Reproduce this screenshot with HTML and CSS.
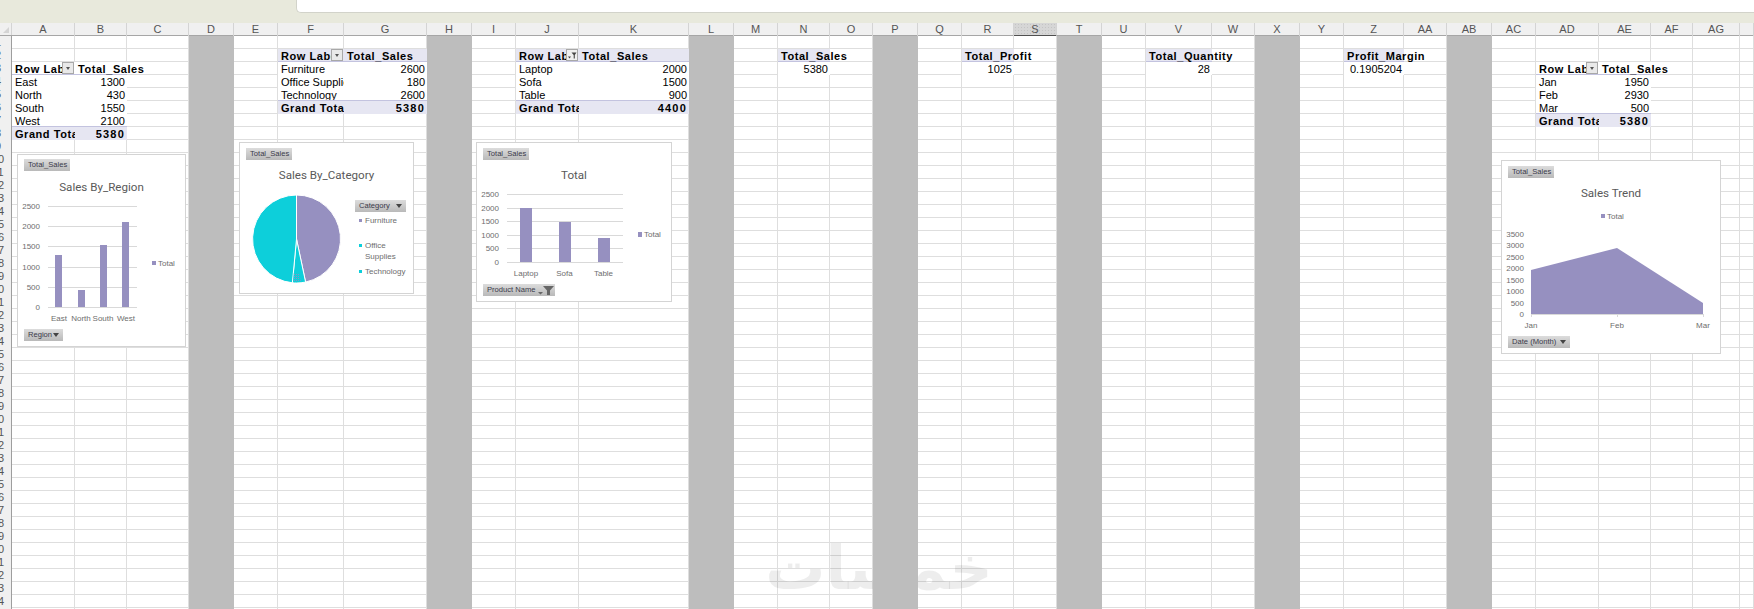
FILE: index.html
```html
<!DOCTYPE html>
<html lang="en">
<head>
<meta charset="utf-8">
<title>Sales dashboard workbook</title>
<link rel="stylesheet" href="styles.css">
</head>
<body>
<div class="ribbon"><div class="formula-box"></div></div>
<div class="head-row">
  <div class="corner"></div>
  <div class="col-heads">
    <div>A</div><div>B</div><div>C</div><div>D</div><div>E</div><div>F</div><div>G</div><div>H</div><div>I</div><div>J</div><div>K</div><div>L</div><div>M</div><div>N</div><div>O</div><div>P</div><div>Q</div><div>R</div><div class="selected">S</div><div>T</div><div>U</div><div>V</div><div>W</div><div>X</div><div>Y</div><div>Z</div><div>AA</div><div>AB</div><div>AC</div><div>AD</div><div>AE</div><div>AF</div><div>AG</div><div></div>
  </div>
</div>
<div class="body-row">
  <div class="row-heads">
    <div><span>1</span></div><div><span>2</span></div><div><span>3</span></div><div><span>4</span></div><div><span>5</span></div><div><span>6</span></div><div><span>7</span></div><div><span>8</span></div><div><span>9</span></div><div><span>10</span></div><div><span>11</span></div><div><span>12</span></div><div><span>13</span></div><div><span>14</span></div><div><span>15</span></div><div><span>16</span></div><div><span>17</span></div><div><span>18</span></div><div><span>19</span></div><div><span>20</span></div><div><span>21</span></div><div><span>22</span></div><div><span>23</span></div><div><span>24</span></div><div><span>25</span></div><div><span>26</span></div><div><span>27</span></div><div><span>28</span></div><div><span>29</span></div><div><span>30</span></div><div><span>31</span></div><div><span>32</span></div><div><span>33</span></div><div><span>34</span></div><div><span>35</span></div><div><span>36</span></div><div><span>37</span></div><div><span>38</span></div><div><span>39</span></div><div><span>40</span></div><div><span>41</span></div><div><span>42</span></div><div><span>43</span></div><div><span>44</span></div>
  </div>
  <div class="sheet">
    <div class="gridlines">
      <div></div><div></div><div></div><div class="gap"></div><div></div><div></div><div></div><div class="gap"></div><div></div><div></div><div></div><div class="gap"></div><div></div><div></div><div></div><div class="gap"></div><div></div><div></div><div></div><div class="gap"></div><div></div><div></div><div></div><div class="gap"></div><div></div><div></div><div></div><div class="gap"></div><div></div><div></div><div></div><div></div><div></div><div></div>
    </div>

    <div class="pivot pv-region">
      <div class="cell head-plain label"><span class="clip">Row Labels</span><span class="drop"></span></div>
      <div class="cell head-plain over">Total_Sales</div>
      <div class="cell label">East</div><div class="cell num">1300</div>
      <div class="cell label">North</div><div class="cell num">430</div>
      <div class="cell label">South</div><div class="cell num">1550</div>
      <div class="cell label">West</div><div class="cell num">2100</div>
      <div class="cell total label">Grand Total</div><div class="cell total num">5380</div>
    </div>

    <div class="pivot pv-category">
      <div class="cell head label"><span class="clip">Row Labels</span><span class="drop"></span></div>
      <div class="cell head over">Total_Sales</div>
      <div class="cell label">Furniture</div><div class="cell num">2600</div>
      <div class="cell label">Office Supplies</div><div class="cell num">180</div>
      <div class="cell label">Technology</div><div class="cell num">2600</div>
      <div class="cell total label">Grand Total</div><div class="cell total num">5380</div>
    </div>

    <div class="pivot pv-product">
      <div class="cell head label"><span class="clip">Row Labels</span><span class="drop drop-filter"><svg viewBox="0 0 10 10" width="10" height="10"><path d="M4.500 2.500h5L7.800 5v3.500H6.700V5zM1 6.500h3L2.500 8.500z" fill="#444"/></svg></span></div>
      <div class="cell head over">Total_Sales</div>
      <div class="cell label">Laptop</div><div class="cell num">2000</div>
      <div class="cell label">Sofa</div><div class="cell num">1500</div>
      <div class="cell label">Table</div><div class="cell num">900</div>
      <div class="cell total label">Grand Total</div><div class="cell total num">4400</div>
    </div>

    <div class="pivot pv-sales"><div class="cell head over">Total_Sales</div><div class="cell num">5380</div></div>
    <div class="pivot pv-profit"><div class="cell head over">Total_Profit</div><div class="cell num">1025</div></div>
    <div class="pivot pv-quantity"><div class="cell head over">Total_Quantity</div><div class="cell num">28</div></div>
    <div class="pivot pv-margin"><div class="cell head over">Profit_Margin</div><div class="cell num">0.1905204</div></div>

    <div class="pivot pv-month">
      <div class="cell head-plain label"><span class="clip">Row Labels</span><span class="drop"></span></div>
      <div class="cell head-plain over">Total_Sales</div>
      <div class="cell label">Jan</div><div class="cell num">1950</div>
      <div class="cell label">Feb</div><div class="cell num">2930</div>
      <div class="cell label">Mar</div><div class="cell num">500</div>
      <div class="cell total label">Grand Total</div><div class="cell total num">5380</div>
    </div>

    <div class="watermark" dir="rtl" lang="ar">خمسات</div>

    <section class="chart chart-region">
      <div class="field">Total_Sales</div>
      <h2 class="chart-title">Sales By_Region</h2>
      <svg class="plot plot-region" viewBox="24 196 155 130" width="155" height="130">
        <g class="grid-line"><path d="M48 206.500H137M48 226.500H137M48 246.500H137M48 267.500H137M48 287.500H137M48 307.500H137"/></g>
        <g class="bar"><rect x="55" y="255" width="7" height="52"/><rect x="78" y="290" width="7" height="17"/><rect x="100" y="245" width="7" height="62"/><rect x="122" y="222" width="7" height="85"/><rect x="152" y="261" width="4" height="4"/></g>
        <g class="axis end"><text x="40" y="209">2500</text><text x="40" y="229">2000</text><text x="40" y="249">1500</text><text x="40" y="270">1000</text><text x="40" y="290">500</text><text x="40" y="310">0</text></g>
        <g class="axis mid"><text x="59" y="321">East</text><text x="81" y="321">North</text><text x="103" y="321">South</text><text x="126" y="321">West</text></g>
        <text class="axis" x="158" y="266">Total</text>
      </svg>
      <div class="field field-region">Region<span class="tri"></span></div>
    </section>

    <section class="chart chart-category">
      <div class="field">Total_Sales</div>
      <h2 class="chart-title">Sales By_Category</h2>
      <div class="pie-body">
        <svg class="pie" viewBox="246 185 100 105" width="100" height="105">
          <defs><pattern id="dots" width="2" height="2" patternUnits="userSpaceOnUse"><rect width="2" height="2" fill="#0dcfda"/><rect width="1" height="1" fill="#8f90c4"/></pattern></defs>
          <path d="M296.500 239V195A44 44 0 0 1 305.600 282.050Z" fill="#9690c0" stroke="#fff"/>
          <path d="M296.500 239L305.600 282.050A44 44 0 0 1 296.500 283 44 44 0 0 1 292.400 282.800Z" fill="#0dcfda" stroke="#fff"/>
          <path d="M296.500 239V195A44 44 0 0 0 292.400 282.800Z" fill="#0dcfda" stroke="#fff"/>
          <path d="M293.800 273H299L301 281.800 293 282Z" fill="url(#dots)"/>
        </svg>
        <div class="legend">
          <div class="field field-category">Category<span class="tri"></span></div>
          <div class="legend-item"><i class="sw sw-purple"></i>Furniture</div>
          <div class="legend-item item-office"><i class="sw sw-cyan"></i><span>Office<br>Supplies</span></div>
          <div class="legend-item item-tech"><i class="sw sw-cyan"></i>Technology</div>
        </div>
      </div>
    </section>

    <section class="chart chart-product">
      <div class="field">Total_Sales</div>
      <h2 class="chart-title">Total</h2>
      <svg class="plot plot-product" viewBox="483 185 182 97" width="182" height="97">
        <g class="grid-line"><path d="M507 194.500H623M507 208.500H623M507 221.500H623M507 235.500H623M507 248.500H623M507 262.500H623"/></g>
        <g class="bar"><rect x="520" y="208" width="12" height="54"/><rect x="559" y="222" width="12" height="40"/><rect x="598" y="238" width="12" height="24"/><rect x="638" y="232" width="4" height="5"/></g>
        <g class="axis end"><text x="499" y="197">2500</text><text x="499" y="211">2000</text><text x="499" y="224">1500</text><text x="499" y="238">1000</text><text x="499" y="251">500</text><text x="499" y="265">0</text></g>
        <g class="axis mid"><text x="526" y="276">Laptop</text><text x="564.500" y="276">Sofa</text><text x="603.500" y="276">Table</text></g>
        <text class="axis" x="644" y="237">Total</text>
      </svg>
      <div class="field field-product">Product Name<svg class="funnel" viewBox="0 0 16 10" width="16" height="10"><path d="M0 7h5L2.500 9.500zM5 1h11L12 5.500V10H9V5.500z" fill="#666"/></svg></div>
    </section>

    <section class="chart chart-month">
      <div class="field">Total_Sales</div>
      <h2 class="chart-title">Sales Trend</h2>
      <svg class="plot plot-month" viewBox="1508 201 206 133" width="206" height="133">
        <rect class="bar" x="1601" y="214" width="4" height="4"/>
        <text class="axis" x="1607" y="219">Total</text>
        <g class="axis end"><text x="1524" y="237">3500</text><text x="1524" y="248">3000</text><text x="1524" y="260">2500</text><text x="1524" y="271">2000</text><text x="1524" y="283">1500</text><text x="1524" y="294">1000</text><text x="1524" y="306">500</text><text x="1524" y="317">0</text></g>
        <path class="bar" d="M1531 270L1617 248 1703 303V314H1531Z"/>
        <g class="grid-line"><path d="M1531 314.500H1703M1531.500 314V317M1617.500 314V317M1703.500 314V317"/></g>
        <g class="axis mid"><text x="1531" y="328">Jan</text><text x="1617" y="328">Feb</text><text x="1703" y="328">Mar</text></g>
      </svg>
      <div class="field field-month">Date (Month)<span class="tri"></span></div>
    </section>
  </div>
</div>
</body>
</html>
```
FILE: styles.css
```css
:root {
  --cols: 63px 52px 62px 45px 44px 66px 83px 45px 44px 63px 110px 45px 44px 52px 43px 45px 44px 52px 43px 45px 44px 66px 43px 45px 44px 60px 43px 45px 44px 63px 52px 42px 47px 14px;
  --line: #dedede;
  --lav: #e6e6f2;
  --purple: #9690c0;
}
* { box-sizing: border-box; }
html, body { margin: 0; height: 100%; overflow: hidden; background: #fff; }
body { font-family: "Liberation Sans", Arial, sans-serif; font-size: 11px; color: #000; }

.ribbon { height: 23px; background: #e8e9dc; }
.formula-box { height: 13px; margin-left: 296px; background: #fff; border: solid #d2d3ca; border-width: 0 0 1px 1px; border-bottom-left-radius: 5px; }

.head-row { display: flex; height: 13px; background: #f0f0f0; border-bottom: 1px solid #a6a6a6; }
.corner { position: relative; width: 12px; border-right: 1px solid #d4d4d4; }
.corner::after { content: ""; position: absolute; left: 3px; top: 4px; border: solid transparent; border-width: 0 0 6px 6px; border-bottom-color: #d4d4d4; }
.col-heads { display: grid; grid-template-columns: var(--cols); flex: 1; }
.col-heads > div { text-align: center; line-height: 12px; color: #555; border-right: 1px solid #d4d4d4; }
.col-heads .selected { background: #d6d6d6 radial-gradient(#c4c4c4 40%, transparent 45%) 0 0 / 3px 3px; border-bottom: 2px solid #505050; margin-bottom: -1px; }

.body-row { display: flex; height: 586px; }
.row-heads { width: 12px; flex: none; overflow: hidden; background: #f0f0f0; border-right: 1px solid #9e9e9e; color: #555; }
.row-heads > div { height: 13px; line-height: 13px; }
.row-heads span { display: block; width: 26px; margin-left: -15px; text-align: center; }

.sheet {
  position: relative; flex: 1; display: grid;
  grid-template-columns: var(--cols);
  grid-template-rows: repeat(45, 13px);
  background: repeating-linear-gradient(to bottom, #fff 0 12px, var(--line) 12px 13px);
}
.gridlines { grid-column: 1 / -1; grid-row: 1 / -1; display: grid; grid-template-columns: subgrid; }
.gridlines > div { border-right: 1px solid var(--line); }
.gridlines > .gap { position: relative; z-index: 2; background: #bdbdbd; border-right: 0; }

.pivot { position: relative; z-index: 1; display: grid; grid-template-columns: subgrid; grid-auto-rows: 13px; background: #fff; }
.pv-region { grid-column: 1 / 3; grid-row: 3 / 9; }
.pv-category { grid-column: 6 / 8; grid-row: 2 / 7; }
.pv-product { grid-column: 10 / 12; grid-row: 2 / 7; }
.pv-sales { grid-column: 14 / 15; grid-row: 2 / 4; }
.pv-profit { grid-column: 18 / 19; grid-row: 2 / 4; }
.pv-quantity { grid-column: 22 / 23; grid-row: 2 / 4; }
.pv-margin { grid-column: 26 / 27; grid-row: 2 / 4; }
.pv-month { grid-column: 30 / 32; grid-row: 3 / 8; }

.cell { height: 13px; line-height: 14px; white-space: nowrap; overflow: hidden; padding: 0 2px 0 3px; }
.num { text-align: right; }
.head, .head-plain, .total { font-weight: 700; letter-spacing: .55px; }
.head { background: var(--lav); border-bottom: 1px solid #c3c3df; }
.head-plain { background: #fff; border-bottom: 1px solid #c3c3df; }
.head.label, .head-plain.label { display: flex; padding-right: 1px; }
.over { overflow: visible; }
.clip { flex: 1; min-width: 0; overflow: hidden; }
.total { background: var(--lav); }
.total.num { letter-spacing: 1.200px; padding-right: 2px; }
.cell:not(.total):has(+ .cell + .total), .cell:not(.total):has(+ .total) { border-bottom: 1px solid #c3c3df; }
.drop { position: relative; flex: none; width: 12px; height: 12px; background: #e9e9e9; border: 1px solid #a8a8a8; }
.drop::after { content: ""; position: absolute; left: 3px; top: 4px; border: solid transparent; border-width: 3px 2.500px 0; border-top-color: #555; }
.drop-filter { background: #f0f0f0; }
.drop-filter::after { display: none; }
.drop-filter svg { display: block; }

.watermark { position: absolute; z-index: 1; left: 752px; top: 492px; width: 230px; font: 700 60px/80px "DejaVu Sans", sans-serif; color: rgba(0, 0, 0, .07); text-align: center; white-space: nowrap; }

.chart { position: absolute; z-index: 3; background: #fff; border: 1px solid #d4d4d4; padding: 5px 6px; display: flex; flex-direction: column; align-items: flex-start; }
.chart-region { left: 5px; top: 118px; width: 169px; height: 193px; padding-top: 4px; }
.chart-category { left: 227px; top: 106px; width: 175px; height: 152px; }
.chart-product { left: 464px; top: 106px; width: 196px; height: 160px; }
.chart-month { left: 1489px; top: 124px; width: 220px; height: 194px; }

.field { display: flex; align-items: center; justify-content: space-between; height: 12px; width: 46px; padding: 0 4px; flex: none; background: linear-gradient(#dcdcdc, #b9b9b9); font-size: 7.600px; line-height: 12px; color: #3a3a4a; white-space: nowrap; }
.field-region { width: 39px; margin-top: 3px; }
.field-category { width: 51px; }
.field-product { width: 72px; margin-top: 2px; padding-right: 1px; }
.field-month { width: 62px; margin-top: 2px; }
.tri { border: solid transparent; border-width: 4px 3px 0; border-top-color: #444; }

.chart-title { align-self: stretch; margin: 7px 0 0; font: 400 11.600px/16px Roboto, sans-serif; color: #595959; text-align: center; }
.chart-region .chart-title { margin-top: 8px; }
.plot { display: block; flex: none; overflow: visible; }
.plot-region { margin-top: 1px; }
.plot-product { margin-top: 2px; }

.grid-line { fill: none; stroke: #d9d9d9; stroke-width: 1; }
.bar { fill: var(--purple); }
.axis { font: 8px "Liberation Sans", sans-serif; fill: #6e6e6e; }
.end { text-anchor: end; }
.mid { text-anchor: middle; }

.pie-body { display: flex; margin-top: 2px; gap: 9px; }
.pie { display: block; flex: none; overflow: visible; }
.legend { margin-top: 15px; font-size: 8px; line-height: 11px; color: #6e6e6e; }
.legend-item { display: flex; align-items: flex-start; gap: 3px; margin: 3px 0 0 4px; white-space: nowrap; }
.item-office { margin-top: 14px; }
.item-tech { margin-top: 4px; }
.sw { width: 3px; height: 3px; margin-top: 4px; flex: none; }
.sw-purple { background: var(--purple); }
.sw-cyan { background: #0dcfda; }
.funnel { flex: none; }
```
